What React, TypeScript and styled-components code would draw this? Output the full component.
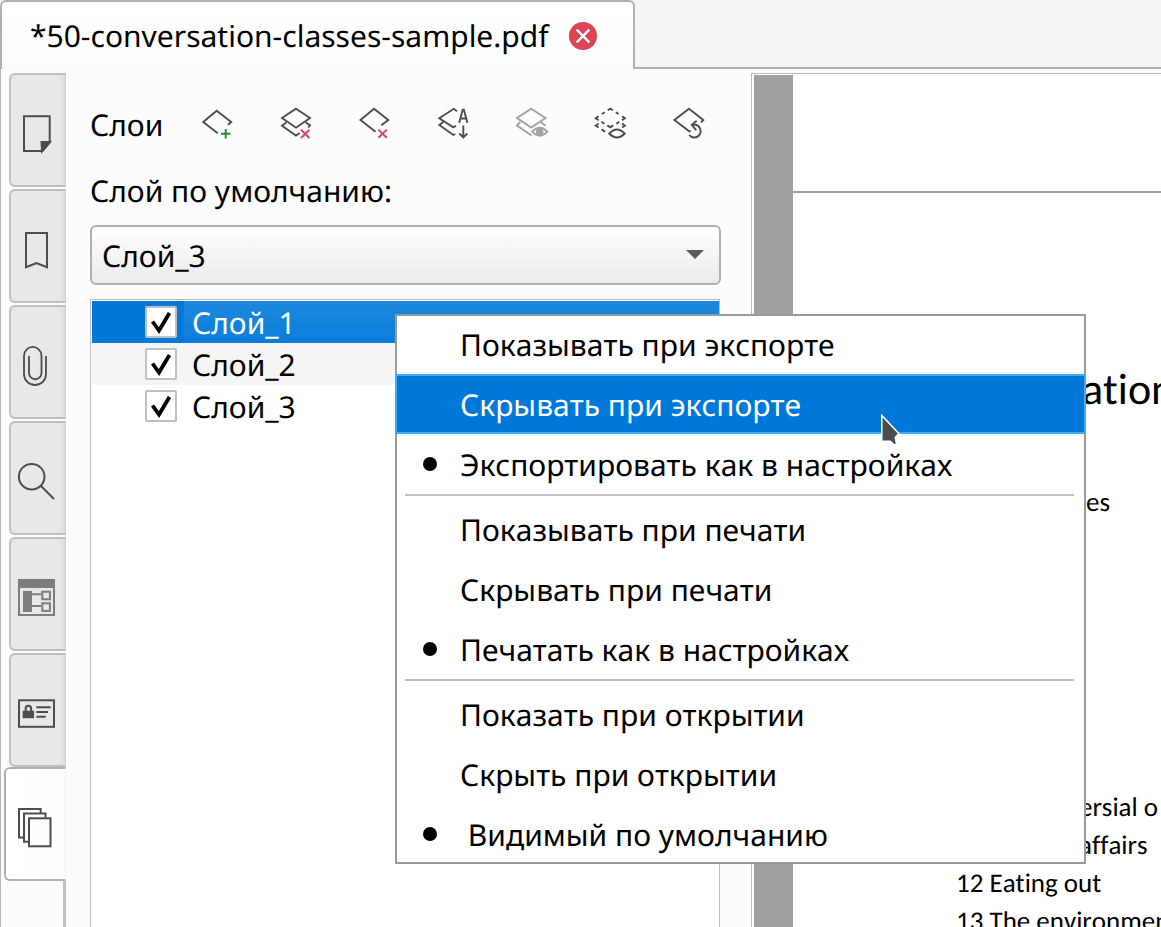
import React from "react";
import styled, { createGlobalStyle, css } from "styled-components";

const GlobalStyle = createGlobalStyle`
  * { box-sizing: border-box; }
  body {
    margin: 0;
    background: #fcfcfc;
    color: #000;
    font-family: "Noto Sans", sans-serif;
    font-size: 30px;
    font-kerning: none;
    text-rendering: geometricPrecision;
    line-height: 40px;
  }
  button, select, input { font: inherit; font-kerning: inherit; text-rendering: inherit; color: inherit; margin: 0; }
`;

const Window = styled.div`
  position: relative;
  display: flex;
  flex-direction: column;
  height: 100vh;
  overflow: hidden;
`;

const TabBar = styled.header`
  display: flex;
  flex: none;
  height: 69px;
  background: #f5f5f5;
`;

const FileTab = styled.div`
  display: flex;
  align-items: center;
  gap: 20px;
  padding: 0 36px 0 28px;
  border: 2px solid #b0b0b0;
  border-bottom: 0;
  border-radius: 6px 6px 0 0;
  background: linear-gradient(#fff, #fcfcfc);
  white-space: nowrap;
`;

const TabBarRest = styled.div`
  flex: 1;
  border-bottom: 2px solid #b0b0b0;
`;

const IconButton = styled.button`
  display: flex;
  flex: none;
  padding: 0;
  border: 0;
  background: none;
`;

const Body = styled.div`
  display: grid;
  grid-template-columns: 65px minmax(0, 685fr) minmax(0, 410fr);
  flex: 1;
  min-height: 0;
  border-left: 1px solid #b8b8b8;
`;

const SideRail = styled.nav`
  display: flex;
  flex-direction: column;
  padding-top: 4px;
`;

const SideTab = styled.button<{ $active?: boolean }>`
  display: flex;
  flex: none;
  align-items: center;
  height: 114px;
  margin: 0 0 2px 8px;
  padding: 8px 0 0 6px;
  border: 2px solid #c0c0c0;
  border-right: 1px solid #d0d0d0;
  border-radius: 6px 0 0 6px;
  background: linear-gradient(90deg, #e8e8e8 90%, #dedede);
  ${(p) =>
    p.$active &&
    css`
      margin: -2px 0 0 3px;
      padding-left: 11px;
      border-color: #b0b0b0;
      border-right-color: #eee;
      background: linear-gradient(90deg, #fff, #fcfcfc);
    `}
`;

const RailRest = styled.div`
  flex: 1;
  border-right: 3px solid #c0c0c0;
`;

const Panel = styled.section`
  display: flex;
  flex-direction: column;
  padding: 36px 30px 0 24px;
`;

const Toolbar = styled.div`
  display: flex;
  align-items: center;
  justify-content: space-between;
  padding-right: 14px;
`;

const Title = styled.h1`
  margin: 0;
  font-size: 30px;
  font-weight: 400;
  line-height: 40px;
`;

const Tools = styled.div`
  display: flex;
  gap: 47px;
  margin-bottom: 4px;
`;

const FieldLabel = styled.label`
  margin-top: 26px;
`;

const SelectBox = styled.div`
  display: grid;
  margin-top: 14px;
  align-items: center;

  & > * { grid-area: 1 / 1; }
  & > svg { justify-self: end; margin-right: 17px; pointer-events: none; }
`;

const Select = styled.select`
  appearance: none;
  width: 100%;
  height: 60px;
  padding: 2px 40px 0 10px;
  border: 2px solid #b0b0b0;
  border-radius: 6px;
  background: linear-gradient(#fefefe, #ebebeb);
`;

const LayerList = styled.ul`
  flex: 1;
  margin: 14px 1px 0 0;
  padding: 1px 0 0 1px;
  border: 1px solid #bbb;
  border-bottom: 0;
  background: #fff;
  list-style: none;
`;

const LayerRow = styled.li<{ $selected?: boolean; $striped?: boolean }>`
  height: 42px;
  background: ${(p) => (p.$selected ? "#0078d9" : p.$striped ? "#f5f5f5" : "#fff")};
  color: ${(p) => (p.$selected ? "#fff" : "#000")};

  & > label {
    display: flex;
    align-items: center;
    height: 42px;
    padding-left: 53px;
    gap: 7px;
  }
  & > label > span {
    flex: 1;
    height: 42px;
    padding: 2px 0 0 8px;
    background: ${(p) => (p.$selected ? "linear-gradient(#1c88df, #0a7ddb)" : "none")};
  }
`;

const CheckFrame = styled.span`
  display: grid;
  && { flex: none; height: 32px; padding: 0; background: none; }
  & > * { grid-area: 1 / 1; }
  & > svg { pointer-events: none; }
`;

const Check = styled.input`
  appearance: none;
  width: 32px;
  height: 32px;
  border: 2px solid #c0c0c0;
  border-radius: 2px;
  background: #fff;
`;

const Viewer = styled.main`
  display: flex;
  margin-top: 4px;
  padding: 1px 0 0 2px;
  border-top: 1px solid #bbb;
  border-left: 1px solid #bbb;
  background: #fff;
`;

const Gutter = styled.div`
  flex: none;
  width: 39px;
  background: #a0a0a0;
`;

const Sheet = styled.article`
  flex: 1;
  min-width: 0;
  overflow: hidden;
  background: #fff;
  font-family: Carlito, Lato, sans-serif;
  font-size: 27px;
  font-variant-ligatures: none;
  line-height: 38px;
  white-space: nowrap;
`;

const SheetHeader = styled.div`
  height: 118px;
  border-bottom: 2px solid #a0a0a0;
`;

const SheetTitle = styled.h2`
  margin: 176px 0 0 289px;
  font-size: 44px;
  font-weight: 400;
  line-height: 40px;
`;

const SheetLine = styled.p<{ $clear?: number; $indent?: number }>`
  margin: ${(p) => p.$clear ?? 0}px 0 0 ${(p) => p.$indent ?? 163}px;
`;

const Menu = styled.div`
  position: absolute;
  top: 314px;
  left: 395px;
  width: 691px;
  background: #fff;
  box-shadow: inset 0 0 0 2px #999;
`;

const MenuItem = styled.button<{ $hover?: boolean }>`
  display: flex;
  align-items: center;
  width: 100%;
  height: 60px;
  padding: 2px 0 0 26px;
  border: 2px solid ${(p) => (p.$hover ? "#3daaff" : "transparent")};
  background: ${(p) => (p.$hover ? "#0078d9" : "none")};
  color: ${(p) => (p.$hover ? "#fff" : "#000")};
  text-align: left;
  white-space: pre;
`;

const Bullet = styled.span<{ $on?: boolean }>`
  width: 14px;
  height: 14px;
  margin: 0 23px 2px 0;
  border-radius: 50%;
  background: ${(p) => (p.$on ? "#000" : "none")};
`;

const Divider = styled.hr`
  height: 2px;
  margin: 0 12px 3px 10px;
  border: 0;
  background: #c0c0c0;
`;

const Pointer = styled.svg`
  position: absolute;
  top: 412px;
  left: 878px;
  pointer-events: none;
`;

const INK = "#4d4d4d";
const RED = "#da4453";

const ToolIcon = ({ color = INK, children }: { color?: string; children: React.ReactNode }) => (
  <svg width="32" height="32" viewBox="0 0 32 32" fill="none" stroke={color} strokeWidth="1.9" overflow="visible" aria-hidden="true">
    {children}
  </svg>
);

const RailIcon = ({ children }: { children: React.ReactNode }) => (
  <svg width="40" height="40" viewBox="0 0 40 40" fill="none" stroke={INK} strokeWidth="2" overflow="visible" aria-hidden="true">
    {children}
  </svg>
);

const tools = [
  {
    name: "Добавить слой",
    icon: (
      <ToolIcon>
        <path d="M16.7 26.3L2.2 14.9 15.7 3.8 30.2 15 27 17.7" />
        <path d="M24.7 22v9.4M20 26.7h9.4" stroke="#1f8a2a" />
      </ToolIcon>
    ),
  },
  {
    name: "Удалить слои",
    icon: (
      <ToolIcon>
        <path d="M16 1.7L30 11 16 20.7 2 11zM6.3 15.5L2 18.8 16 28.5 19.7 26M25.7 15.5L30 18.3 28.3 20.5" />
        <path d="M21 22.8l8.4 8.2M29.4 22.8L21 31" stroke={RED} />
      </ToolIcon>
    ),
  },
  {
    name: "Удалить слой",
    icon: (
      <ToolIcon>
        <path d="M16.5 24.8L1.5 13 15 1.8 29.3 13 22.3 18.3" />
        <path d="M19.4 22.6l8.4 8.2M27.8 22.6l-8.4 8.2" stroke={RED} />
      </ToolIcon>
    ),
  },
  {
    name: "Сортировать",
    icon: (
      <ToolIcon>
        <path d="M19 4.3L15.8 1.8 1.3 11.2 15.3 20.3 18 18.7M5.3 15L1.3 18 15.3 28 17.3 27" />
        <path d="M21.2 15.7L24.7 2.7h1.2l3.5 13M22.5 11.5h5.6M25.3 18.5V30M21.3 26.5l4 4 4-4" />
      </ToolIcon>
    ),
  },
  {
    name: "Показать слои",
    icon: (
      <ToolIcon color="#a3a3a3">
        <path d="M14.2 1.7L28.5 11 14.2 20.5 0 11zM3.3 15L0 18.5 14.5 28.5M23.7 15l5 3.7" />
        <path d="M15.2 24.7Q22.7 16.7 30.3 24.7 22.7 32.7 15.2 24.7z" />
        <circle cx="22.7" cy="24.7" r="2.8" fill="#a3a3a3" />
      </ToolIcon>
    ),
  },
  {
    name: "Скрыть слои",
    icon: (
      <ToolIcon>
        <path d="M11.8 3.3l2.5-1.6 2.5 1.6M8.8 5.2L6 7M19.8 5.2L22.6 7M2.6 9.2L-.3 11.3l2.9 1.9M26 9.2l2.9 2.1-2.9 1.9M5.3 14.8l3 1.9M23.3 14.8l-3 1.9M11.3 18.4l3 1.9 3-1.9M2.6 16.4l-2.9 2.2 2.9 1.9M26 16.4l2.9 2.2-2.9 1.9M5.6 22.4l3.4 2.2" />
        <path d="M13.3 26.5Q21 18.5 28.7 26.5 21 34.5 13.3 26.5z" />
      </ToolIcon>
    ),
  },
  {
    name: "Восстановить слой",
    icon: (
      <ToolIcon>
        <path d="M15.7 24.3H14.2L-.6 13 14 1.8 28.3 13 26 15.2" />
        <path d="M17 17.8H20.5A6.4 6.4 0 1 1 14.2 28M21.7 13.8l-5 4 4.5 5.4" />
      </ToolIcon>
    ),
  },
];

const railTabs = [
  {
    name: "Страницы",
    icon: (
      <RailIcon>
        <path d="M7 2.2H32.7V28.5L25.5 37H7z" />
        <path d="M24.5 28h8.5l-8 9.5z" fill={INK} />
      </RailIcon>
    ),
  },
  { name: "Закладки", icon: <RailIcon><path d="M9 3H30V37.3L19.5 33 9 37.3z" /></RailIcon> },
  {
    name: "Вложения",
    icon: (
      <RailIcon>
        <path d="M29 10V28A11 11 0 0 1 7 28V9.7A8.7 8.7 0 0 1 24.5 9.7V27A6.2 6.2 0 0 1 12 27V10" strokeWidth="1.8" />
      </RailIcon>
    ),
  },
  {
    name: "Поиск",
    icon: (
      <RailIcon>
        <circle cx="14.7" cy="14.7" r="12.8" />
        <path d="M24 24L37 37" />
      </RailIcon>
    ),
  },
  {
    name: "Поля формы",
    icon: (
      <RailIcon>
        <g stroke="#7d7d7d">
          <rect x="2" y="2" width="35" height="35" />
          <path d="M1 1h37v9H1zM6 13h9v21H6z" fill="#7d7d7d" stroke="none" />
          <path d="M15 16.2h9M15 28h9" />
          <rect x="25.3" y="13.7" width="7.6" height="7.6" />
          <rect x="25.3" y="25.3" width="7.6" height="7.6" />
        </g>
      </RailIcon>
    ),
  },
  {
    name: "Подписи",
    icon: (
      <RailIcon>
        <rect x="2" y="6.3" width="35" height="26.5" />
        <rect x="5.7" y="16.7" width="11.3" height="7.5" fill={INK} stroke="none" />
        <path d="M8.7 17v-2.5a2.7 2.7 0 0 1 5.4 0V17M19.3 13.3h14.4M19.3 18h11.7M19.3 22.7h9.4" />
      </RailIcon>
    ),
  },
  {
    name: "Слои",
    active: true,
    icon: (
      <RailIcon>
        <path d="M23.7 5V1H2v28.5h4.5M28.5 9.5V5.5H7V33.8H11.5" />
        <rect x="12" y="10.3" width="21.5" height="28" />
      </RailIcon>
    ),
  },
];

const layers = ["Слой_1", "Слой_2", "Слой_3"];

const menuGroups = [
  [
    { text: "Показывать при экспорте" },
    { text: "Скрывать при экспорте", hover: true },
    { text: "Экспортировать как в настройках", on: true },
  ],
  [
    { text: "Показывать при печати" },
    { text: "Скрывать при печати" },
    { text: "Печатать как в настройках", on: true },
  ],
  [
    { text: "Показать при открытии" },
    { text: "Скрыть при открытии" },
    { text: " Видимый по умолчанию", on: true },
  ],
] as { text: string; on?: boolean; hover?: boolean }[][];

export default function App() {
  return (
    <Window>
      <GlobalStyle />
      <TabBar>
        <FileTab>
          <span>*50-conversation-classes-sample.pdf</span>
          <IconButton aria-label="Закрыть">
            <svg width="28" height="28" viewBox="0 0 28 28" aria-hidden="true">
              <circle cx="14" cy="14" r="14" fill={RED} />
              <path d="M7.7 7.7L20.3 20.3M20.3 7.7L7.7 20.3" stroke="#fff" strokeWidth="2.4" />
            </svg>
          </IconButton>
        </FileTab>
        <TabBarRest />
      </TabBar>

      <Body>
        <SideRail>
          {railTabs.map((t) => (
            <SideTab key={t.name} $active={t.active} aria-label={t.name}>
              {t.icon}
            </SideTab>
          ))}
          <RailRest />
        </SideRail>

        <Panel>
          <Toolbar>
            <Title>Слои</Title>
            <Tools>
              {tools.map((t) => (
                <IconButton key={t.name} aria-label={t.name}>
                  {t.icon}
                </IconButton>
              ))}
            </Tools>
          </Toolbar>
          <FieldLabel htmlFor="default-layer">Слой по умолчанию:</FieldLabel>
          <SelectBox>
            <Select id="default-layer" defaultValue="Слой_3">
              {layers.map((l) => (
                <option key={l}>{l}</option>
              ))}
            </Select>
            <svg width="18" height="10" viewBox="0 0 18 10" aria-hidden="true">
              <path d="M0 0H18L9 9z" fill="#5a5a5a" />
            </svg>
          </SelectBox>
          <LayerList>
            {layers.map((l, i) => (
              <LayerRow key={l} $selected={i === 0} $striped={i === 1}>
                <label>
                  <CheckFrame>
                    <Check type="checkbox" defaultChecked />
                    <svg width="32" height="32" viewBox="0 0 32 32" aria-hidden="true">
                      <path d="M7.5 15.5L14 24.5 24.5 7" fill="none" stroke="#000" strokeWidth="3.8" />
                    </svg>
                  </CheckFrame>
                  <span>{l}</span>
                </label>
              </LayerRow>
            ))}
          </LayerList>
        </Panel>

        <Viewer>
          <Gutter />
          <Sheet>
            <SheetHeader />
            <SheetTitle>ation</SheetTitle>
            <SheetLine $clear={75} $indent={293}>es</SheetLine>
            <SheetLine $clear={267} $indent={286}>ersial o</SheetLine>
            <SheetLine $indent={286}>affairs</SheetLine>
            <SheetLine>12 Eating out</SheetLine>
            <SheetLine>13 The environment</SheetLine>
          </Sheet>
        </Viewer>
      </Body>

      <Menu role="menu">
        {menuGroups.map((group, g) => (
          <React.Fragment key={g}>
            {g > 0 && <Divider />}
            {group.map((item) => (
              <MenuItem key={item.text} role="menuitemradio" aria-checked={!!item.on} $hover={item.hover}>
                <Bullet $on={item.on} />
                {item.text}
              </MenuItem>
            ))}
          </React.Fragment>
        ))}
      </Menu>

      <Pointer width="24" height="38" viewBox="0 0 24 38" aria-hidden="true">
        <path d="M3.8 3.5V29.3H12.3L16.5 33.3 18.5 31.7 17.3 25.5 20.8 21.5z" fill={INK} stroke="#fff" strokeWidth="1.5" />
      </Pointer>
    </Window>
  );
}
